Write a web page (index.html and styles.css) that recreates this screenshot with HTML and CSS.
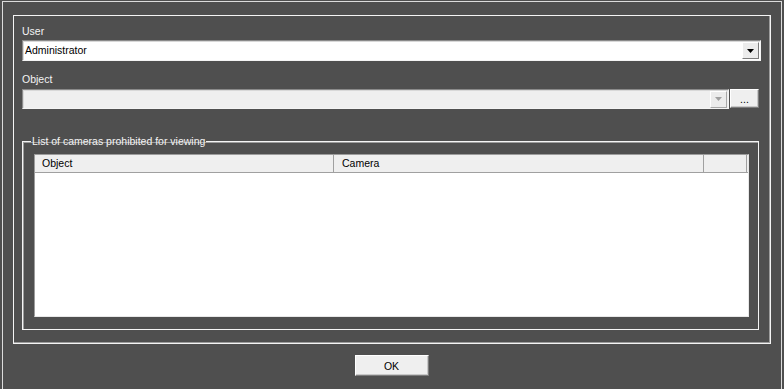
FILE: index.html
```html
<!DOCTYPE html>
<html lang="en">
<head>
    <meta charset="UTF-8">
    <title>Camera restrictions</title>
    <link rel="stylesheet" href="styles.css">
</head>
<body>
    <div class="window">
        <div class="frame">
            <div class="field-label">User</div>
            <div class="combo">
                <span class="combo-text">Administrator</span>
                <span class="combo-btn">
                    <svg width="7" height="4" viewBox="0 0 7 4"><path d="M0 0h7L3.5 4z" fill="#000"/></svg>
                </span>
            </div>

            <div class="field-label gap">Object</div>
            <div class="combo-row">
                <div class="combo disabled">
                    <span class="combo-text"></span>
                    <span class="combo-btn">
                        <svg width="7" height="4" viewBox="0 0 7 4"><path d="M0 0h7L3.5 4z" fill="#a0a0a0"/></svg>
                    </span>
                </div>
                <button class="btn btn-dots">...</button>
            </div>

            <fieldset class="group">
                <legend>List of cameras prohibited for viewing</legend>
                <div class="list">
                    <div class="list-head">
                        <div class="col col-object">Object</div>
                        <div class="col col-camera">Camera</div>
                        <div class="col col-rest"></div>
                    </div>
                </div>
            </fieldset>
        </div>

        <div class="actions">
            <button class="btn btn-ok">OK</button>
        </div>
    </div>
</body>
</html>
```

FILE: styles.css
```css
html, body {
    margin: 0;
    padding: 0;
}
body {
    width: 784px;
    height: 389px;
    overflow: hidden;
    background: #4f4f4f;
    font-family: 'Liberation Sans', Arial, sans-serif;
    font-size: 10.5px;
    color: #000000;
}
.window {
    box-sizing: border-box;
    width: 780px;
    height: 388px;
    margin: 1px 0 0 2px;
    padding: 13px 10px 0 10px;
    border: 1px solid #dcdcdc;
    border-bottom: none;
}
.frame {
    box-sizing: border-box;
    width: 758px;
    height: 329px;
    padding: 9px 9px 0 8px;
    border: 1px solid #f4f4f4;
    box-shadow: inset -1px -1px 0 #9c9c9c;
}
.field-label {
    height: 13px;
    line-height: 13px;
    margin-bottom: 2px;
    color: #f4f4f4;
}
.field-label.gap {
    margin-top: 12px;
    margin-bottom: 3px;
}
.combo {
    box-sizing: border-box;
    display: flex;
    align-items: center;
    height: 21px;
    padding: 0 1px 0 2px;
    background: #ffffff;
    border: 1px solid;
    border-color: #8a8a8a #f4f4f4 #f4f4f4 #8a8a8a;
    box-shadow: inset 1px 1px 0 #d8d8d8;
}
.combo-text {
    flex: 1;
    line-height: 13px;
}
.combo-btn {
    box-sizing: border-box;
    display: flex;
    align-items: center;
    justify-content: center;
    width: 17px;
    height: 17px;
    background: #ececec;
    border: 1px solid;
    border-color: #ffffff #7c7c7c #7c7c7c #ffffff;
}
.combo-row {
    display: flex;
    gap: 1px;
}
.combo-row .combo {
    width: 707px;
    height: 20px;
}
.combo.disabled {
    background: #efefef;
}
.combo.disabled .combo-btn {
    border-color: #ffffff #a8a8a8 #a8a8a8 #ffffff;
}
.btn {
    box-sizing: border-box;
    margin: 0;
    padding: 0;
    font: inherit;
    background: #efefef;
    border: 1px solid;
    border-color: #ffffff #7c7c7c #7c7c7c #ffffff;
    box-shadow: inset -1px -1px 0 #c8c8c8;
    color: #000000;
}
.btn-dots {
    width: 29px;
    height: 19px;
    line-height: 13px;
    padding-top: 2px;
}
.group {
    box-sizing: border-box;
    width: 737px;
    height: 195px;
    margin: 26px 0 0 0;
    padding: 6px 9px 0 11px;
    border: 1px solid #f4f4f4;
    box-shadow: inset 1px 1px 0 #9c9c9c;
}
.group legend {
    margin-left: -3px;
    padding: 0 1px;
    line-height: 13px;
    color: #f4f4f4;
}
.list {
    box-sizing: border-box;
    height: 163px;
    background: #ffffff;
    border: 1px solid;
    border-color: #9c9c9c #e8e8e8 #e8e8e8 #9c9c9c;
}
.list-head {
    display: flex;
    height: 17px;
    background: #efefef;
    border-bottom: 1px solid #a0a0a0;
}
.col {
    box-sizing: border-box;
    line-height: 17px;
    padding-left: 7px;
    border-right: 1px solid #a0a0a0;
}
.col-object {
    width: 299px;
}
.col-camera {
    width: 370px;
    padding-left: 8px;
}
.col-rest {
    width: 43px;
}
.actions {
    display: flex;
    justify-content: center;
    padding-top: 11px;
}
.btn-ok {
    width: 74px;
    height: 21px;
    margin-left: -1px;
}
```
